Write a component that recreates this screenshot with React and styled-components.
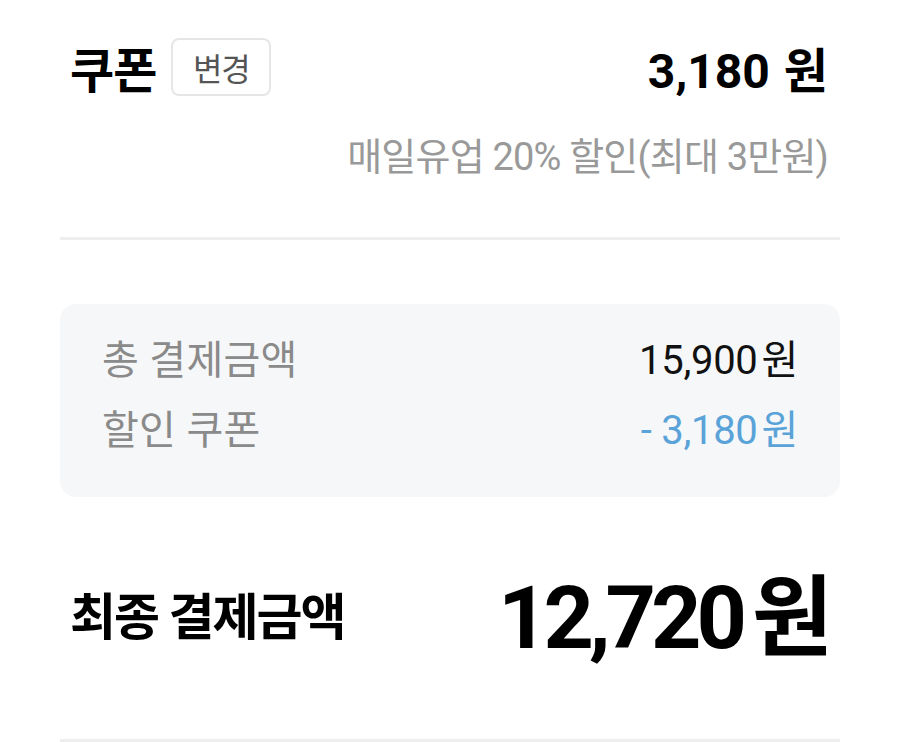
import React from 'react';
import styled, { createGlobalStyle } from 'styled-components';

const GlobalStyle = createGlobalStyle`
  html, body {
    margin: 0;
    padding: 0;
    background: #ffffff;
  }
  body {
    font-family: Roboto, "Noto Sans CJK KR", "Noto Sans", sans-serif;
    color: #111;
  }
`;

const Page = styled.div`
  width: 900px;
  height: 742px;
  padding: 0 60px;
  box-sizing: border-box;
  overflow: hidden;
  display: flex;
  flex-direction: column;
`;

const CouponSection = styled.section`
  padding: 38px 12px 0 10px;
  height: 240px;
  box-sizing: border-box;
  border-bottom: 3px solid #eeeeee;
`;

const Row = styled.div`
  display: flex;
  align-items: ${p => p.$align || 'center'};
  justify-content: space-between;
`;

const TitleGroup = styled.div`
  display: flex;
  align-items: flex-end;
  gap: 15px;
`;

const Title = styled.h2`
  margin: 0;
  font-size: ${p => p.$size || 48}px;
  font-weight: 700;
  letter-spacing: ${p => p.$spacing ?? -1}px;
  line-height: 1;
  color: #000;
`;

const ChangeButton = styled.button`
  width: 100px;
  height: 58px;
  border: 2px solid #e6e6e6;
  border-radius: 8px;
  background: #fff;
  font-family: inherit;
  font-size: 32px;
  color: #555;
  letter-spacing: -1px;
  padding: 0;
`;

const Amount = styled.div`
  font-size: ${p => p.$size}px;
  font-weight: ${p => p.$weight || 700};
  color: ${p => p.$color || '#000'};
  letter-spacing: ${p => p.$spacing || 0}px;
  line-height: 1;
  white-space: nowrap;
`;

const Unit = styled.span`
  margin-left: ${p => p.$gap || 8}px;
`;

const Note = styled.div`
  margin-top: 30px;
  text-align: right;
  font-size: 38px;
  color: #999;
  letter-spacing: -0.8px;
`;

const SummaryBox = styled.div`
  margin-top: 64px;
  height: 193px;
  box-sizing: border-box;
  background: #f6f7f9;
  border-radius: 16px;
  padding: 34px 42px 0 42px;
  display: flex;
  flex-direction: column;
  gap: 24px;
`;

const Label = styled.span`
  font-size: 40px;
  color: #8a8a8a;
  letter-spacing: 0.3px;
  line-height: 46px;
`;

const FinalSection = styled.section`
  flex: 1;
  padding: 0 12px 0 10px;
  display: flex;
  align-items: center;
  justify-content: space-between;
  border-bottom: 3px solid #eeeeee;
`;

function App() {
  return (
    <>
      <GlobalStyle />
      <Page>
        <CouponSection>
          <Row $align="flex-end">
            <TitleGroup>
              <Title>쿠폰</Title>
              <ChangeButton>변경</ChangeButton>
            </TitleGroup>
            <Amount $size={48}>3,180<Unit $gap={14}>원</Unit></Amount>
          </Row>
          <Note>매일유업 20% 할인(최대 3만원)</Note>
        </CouponSection>

        <SummaryBox>
          <Row>
            <Label>총 결제금액</Label>
            <Amount $size={40} $weight={400} $spacing={-0.3} $color="#111">15,900<Unit $gap={4}>원</Unit></Amount>
          </Row>
          <Row>
            <Label>할인 쿠폰</Label>
            <Amount $size={40} $weight={400} $spacing={-0.3} $color="#5aa3d8">- 3,180<Unit $gap={4}>원</Unit></Amount>
          </Row>
        </SummaryBox>

        <FinalSection>
          <Title $size={50} $spacing={-2}>최종 결제금액</Title>
          <Amount $size={88} $spacing={-5}>12,720<Unit $gap={10}>원</Unit></Amount>
        </FinalSection>
      </Page>
    </>
  );
}

export default App;
